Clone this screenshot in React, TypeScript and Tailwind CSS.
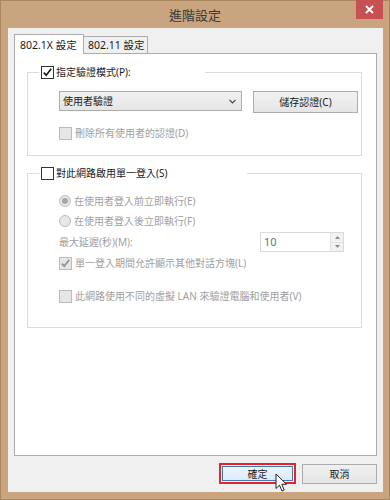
import React from "react";

const FONT = { fontFamily: '"Noto Sans", "Noto Sans CJK TC", sans-serif' };

function Check({ checked, disabled }: { checked?: boolean; disabled?: boolean }) {
  return (
    <span
      className={
        "w-[13px] h-[13px] shrink-0 border flex items-center justify-center " +
        (disabled ? "border-[#bcbcbc] bg-[#e6e6e6]" : "border-[#333333] bg-white")
      }
    >
      {checked && (
        <svg width="11" height="11" viewBox="0 0 11 11">
          <path
            d="M1.8 5.6 L4.2 8.2 L9.2 1.8"
            fill="none"
            stroke={disabled ? "#8d8d8d" : "#1a1a1a"}
            strokeWidth="1.7"
          />
        </svg>
      )}
    </span>
  );
}

function Radio({ selected }: { selected?: boolean }) {
  return (
    <span className="w-[12px] h-[12px] shrink-0 rounded-full border border-[#bcbcbc] bg-[#e8e8e8] flex items-center justify-center">
      {selected && <span className="w-[6px] h-[6px] rounded-full bg-[#a8a8a8]" />}
    </span>
  );
}

export default function App() {
  return (
    <div
      className="w-[390px] h-[500px] bg-[#c9a47f] border border-[#a8865f] flex flex-col relative text-[10px] leading-[16px]"
      style={FONT}
    >
      {/* title bar */}
      <div className="h-[27px] shrink-0 flex items-center justify-center text-[13px] text-[#3a3a3a]">
        進階設定
      </div>
      <div className="absolute -top-px right-[6px] w-[27px] h-[19px] bg-[#c75050] flex items-center justify-center">
        <svg width="9" height="9" viewBox="0 0 9 9">
          <path d="M1 1 L8 8 M8 1 L1 8" stroke="#ffffff" strokeWidth="2" />
        </svg>
      </div>

      {/* client */}
      <div className="flex-1 ml-[7px] mr-[6px] mb-[7px] bg-[#f0f0f0] flex flex-col px-[6px] pt-[6px]">
        {/* tabs */}
        <div className="flex items-end h-[20px] -mb-px relative z-10">
          <div className="h-[20px] w-[70px] bg-white border border-b-0 border-[#adadad] flex items-center pl-[5px] text-[#1a1a1a] text-[10.5px]">
            802.1X 設定
          </div>
          <div className="h-[17px] mb-px w-[64px] bg-[#f0f0f0] border border-l-0 border-b-0 border-[#adadad] flex items-center pl-[4px] text-[#1a1a1a] text-[10.5px]">
            802.11 設定
          </div>
        </div>

        {/* panel */}
        <div className="flex-1 bg-white border border-[#adadad] pl-[12px] pr-[14px] pt-[10px]">
          {/* group 1 */}
          <fieldset className="border border-[#dcdcdc] p-0 m-0">
            <legend className="ml-[11px] w-[166px] h-[16px] flex items-center pl-[2px] gap-[2px] text-[#1a1a1a]">
              <Check checked />
              <span>指定驗證模式(P):</span>
            </legend>
            <div className="pl-[31px] pr-[3px] pt-[11px] pb-[14px]">
              <div className="flex items-start h-[22px]">
                <div className="w-[183px] h-[20px] border border-[#acacac] bg-gradient-to-b from-[#f2f2f2] to-[#e5e5e5] flex items-center justify-between pl-[3px] pr-[5px] text-[#1a1a1a]">
                  <span>使用者驗證</span>
                  <svg width="7" height="5" viewBox="0 0 7 5">
                    <path d="M0.5 0.8 L3.5 3.8 L6.5 0.8" fill="none" stroke="#444" strokeWidth="1.2" />
                  </svg>
                </div>
                <div className="ml-[11px] w-[105px] h-[22px] border border-[#acacac] bg-gradient-to-b from-[#f2f2f2] to-[#e5e5e5] flex items-center justify-center text-[#1a1a1a]">
                  儲存認證(C)
                </div>
              </div>
              <div className="mt-[12px] h-[16px] flex items-center gap-[3px] text-[#a0a0a0]">
                <Check disabled />
                <span>刪除所有使用者的認證(D)</span>
              </div>
            </div>
          </fieldset>

          {/* group 2 */}
          <fieldset className="border border-[#dcdcdc] p-0 m-0 mt-[9px]">
            <legend className="ml-[11px] w-[208px] h-[16px] flex items-center pl-[2px] gap-[2px] text-[#1a1a1a]">
              <Check />
              <span>對此網路啟用單一登入(S)</span>
            </legend>
            <div className="pl-[31px] pr-[17px] pt-[12px] pb-[23px] text-[#a0a0a0]">
              <div className="h-[16px] flex items-center gap-[3px]">
                <Radio selected />
                <span>在使用者登入前立即執行(E)</span>
              </div>
              <div className="mt-[4px] h-[16px] flex items-center gap-[3px]">
                <Radio />
                <span>在使用者登入後立即執行(F)</span>
              </div>
              <div className="mt-[3px] h-[20px] flex items-center justify-between">
                <span>最大延遲(秒)(M):</span>
                <div className="w-[84px] h-[20px] border border-[#d9d9d9] bg-white flex">
                  <div className="flex-1 flex items-center pl-[3px] text-[#707070] text-[11px]">10</div>
                  <div className="w-[13px] flex flex-col border-l border-[#e3e3e3]">
                    <div className="flex-1 bg-[#f2f2f2] border-b border-[#e3e3e3] flex items-center justify-center">
                      <svg width="5" height="3" viewBox="0 0 5 3">
                        <path d="M0 3 L2.5 0 L5 3 Z" fill="#8a8a8a" />
                      </svg>
                    </div>
                    <div className="flex-1 bg-[#f2f2f2] flex items-center justify-center">
                      <svg width="5" height="3" viewBox="0 0 5 3">
                        <path d="M0 0 L2.5 3 L5 0 Z" fill="#8a8a8a" />
                      </svg>
                    </div>
                  </div>
                </div>
              </div>
              <div className="mt-[3px] h-[16px] flex items-center gap-[3px]">
                <Check checked disabled />
                <span>單一登入期間允許顯示其他對話方塊(L)</span>
              </div>
              <div className="mt-[17px] h-[16px] flex items-center gap-[3px]">
                <Check disabled />
                <span>此網路使用不同的虛擬 LAN 來驗證電腦和使用者(V)</span>
              </div>
            </div>
          </fieldset>
        </div>

        {/* buttons */}
        <div className="h-[21px] mt-[7px] mb-[8px] flex items-end justify-end gap-[6px] shrink-0">
          <div className="relative w-[77px] h-[21px] border-2 border-[#e8232b] p-px">
            <div className="w-full h-full border border-[#3c7fb1] bg-gradient-to-b from-[#eaf4fc] to-[#dcecfc] flex items-center justify-center text-[#1a1a1a]">
              確定
            </div>
            <svg
              className="absolute left-[54px] top-[8px]"
              width="13"
              height="20"
              viewBox="0 0 13 20"
            >
              <path
                d="M1 1 L1 15.5 L4.5 12.2 L7 18 L9.2 17 L6.8 11.3 L11.5 11.3 Z"
                fill="#ffffff"
                stroke="#222"
                strokeWidth="1"
                strokeLinejoin="round"
              />
            </svg>
          </div>
          <div className="w-[75px] h-[20px] border border-[#acacac] bg-gradient-to-b from-[#f0f0f0] to-[#e5e5e5] flex items-center justify-center text-[#1a1a1a]">
            取消
          </div>
        </div>
      </div>
    </div>
  );
}
